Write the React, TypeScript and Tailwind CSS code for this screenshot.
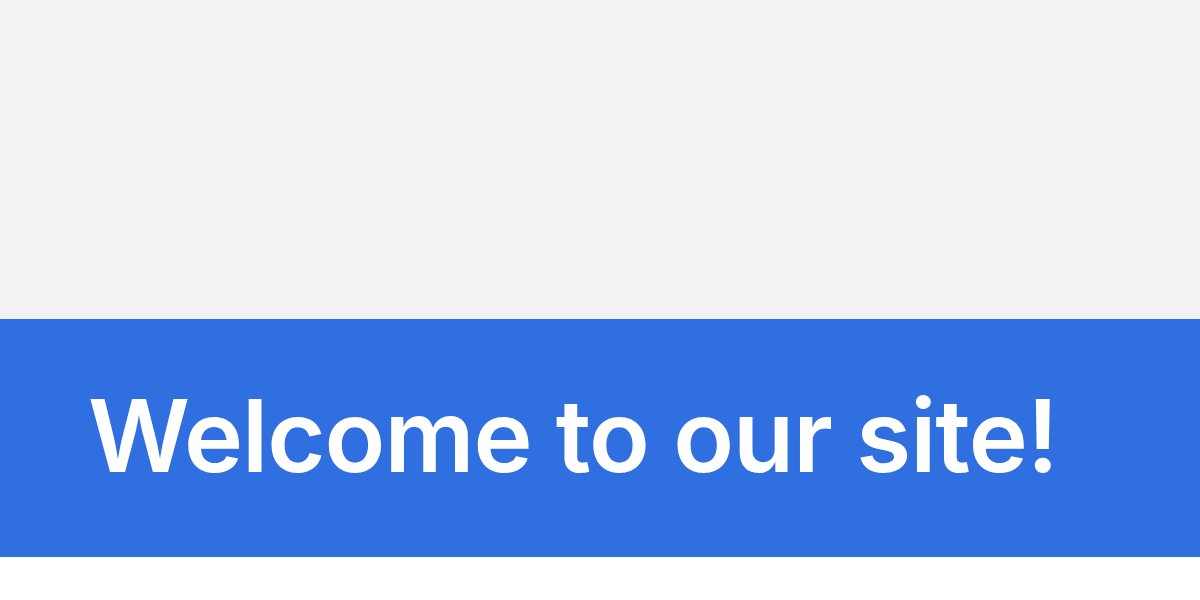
export default function App() {
  return (
    <div className="w-[1200px] h-[600px] bg-white flex flex-col" style={{ fontFamily: "Inter, 'Liberation Sans', sans-serif" }}>
      <div className="h-[319px] bg-[#f2f2f2]" />
      <div className="h-[238px] bg-[#2f6fdf] pl-[88px] pt-[67px]">
        <h1 className="text-[100px] leading-none font-semibold text-white tracking-[-1px]">Welcome to our site!</h1>
      </div>
      <div className="flex-1 bg-white" />
    </div>
  );
}
